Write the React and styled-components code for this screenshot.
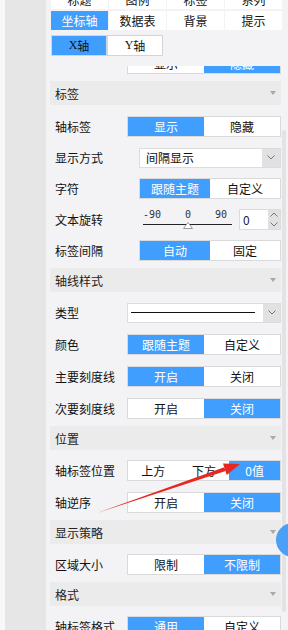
import React from 'react'
import styled, { createGlobalStyle } from 'styled-components'

const BLUE = '#409eff'

const GlobalStyle = createGlobalStyle`
  html, body {
    margin: 0;
    padding: 0;
  }
  body {
    width: 288px;
    height: 630px;
    overflow: hidden;
    background: #f3f3f5;
    color: #111;
    font-family: "Noto Sans CJK SC", "Noto Sans", sans-serif;
    font-size: 12px;
  }
`

const Frame = styled.div`
  position: relative;
  display: flex;
  width: 288px;
  height: 630px;
  overflow: hidden;
`

const Edge = styled.div`
  width: 5px;
  flex-shrink: 0;
  background: #f8f8f6;
`

const Sidebar = styled.div`
  width: 41px;
  flex-shrink: 0;
  background: #e6e6e6;
`

const Panel = styled.div`
  flex: 1;
  min-width: 0;
  display: flex;
  flex-direction: column;
  padding-left: 4px;
  background: #f3f3f5;
`

const TabGrid = styled.div`
  display: grid;
  grid-template-columns: repeat(4, 57px);
  grid-auto-rows: 19px;
  column-gap: 1px;
  row-gap: 2px;
  margin: -10px 0 0 1px;
`

const Tab = styled.div`
  display: flex;
  align-items: center;
  justify-content: center;
  background: ${p => (p.active ? BLUE : '#fff')};
  color: ${p => (p.active ? '#fff' : '#111')};
`

const AxisTabs = styled.div`
  display: flex;
  margin: 5px 0 0 1px;
`

const AxisTab = styled.div`
  box-sizing: border-box;
  width: 56px;
  height: 21px;
  display: flex;
  align-items: center;
  justify-content: center;
  border: 1px solid ${p => (p.active ? '#cfd8e2' : '#d4d4d4')};
  background: ${p => (p.active ? BLUE : '#fff')};
  color: #111;
`

const Latin = styled.span`
  font-family: "Liberation Serif", serif;
  font-size: 12px;
`

const ScrollArea = styled.div`
  flex: 1;
  min-height: 0;
  display: flex;
  margin-top: 10px;
  overflow: hidden;
`

const ScrollContent = styled.div`
  width: 231px;
  flex-shrink: 0;
  display: flex;
  flex-direction: column;
  margin-top: -13px;
`

const ScrollTrack = styled.div`
  width: 4px;
  margin-left: 1px;
  display: flex;
  flex-direction: column;
`

const ScrollThumb = styled.div`
  margin-top: 64px;
  height: 482px;
  border-radius: 2px;
  background: #e3e3e5;
`

const SectionHeader = styled.div`
  height: 24px;
  flex-shrink: 0;
  display: flex;
  align-items: center;
  justify-content: space-between;
  padding: 0 5px;
  background: #ebebeb;
  color: #222;
`

const Caret = styled.span`
  width: 0;
  height: 0;
  border-left: 3.5px solid transparent;
  border-right: 3.5px solid transparent;
  border-top: 4px solid #a8a8a8;
`

const SectionBody = styled.div`
  display: flex;
  flex-direction: column;
  gap: ${p => p.gap || 11}px;
  padding: ${p => (p.top === undefined ? 10 : p.top)}px 0 7px;
`

const Row = styled.div`
  display: flex;
  align-items: center;
  height: 21px;
  flex-shrink: 0;
  padding-left: 5px;
`

const Label = styled.div`
  width: ${p => p.w}px;
  flex-shrink: 0;
  white-space: nowrap;
  color: #111;
`

const Segment = styled.div`
  box-sizing: border-box;
  flex: 1;
  height: 21px;
  display: flex;
  border: 1px solid #dadada;
  background: #fff;
`

const SegItem = styled.div`
  flex: 1;
  display: flex;
  align-items: center;
  justify-content: center;
  background: ${p => (p.active ? BLUE : 'transparent')};
  color: ${p => (p.active ? '#fff' : '#111')};
`

const Select = styled.div`
  box-sizing: border-box;
  flex: 1;
  height: 20px;
  display: flex;
  border: 1px solid #dcdcdc;
  background: #fff;
`

const SelectValue = styled.div`
  flex: 1;
  display: flex;
  align-items: center;
  padding-left: 6px;
`

const LineSample = styled.div`
  flex: 1;
  height: 1px;
  margin: 0 8px 0 3px;
  align-self: center;
  background: #111;
`

const SelectArrow = styled.div`
  width: ${p => p.w || 18}px;
  display: flex;
  align-items: center;
  justify-content: center;
  background: #e1e1e1;
`

const SliderBox = styled.div`
  position: relative;
  width: 89px;
  height: 21px;
  margin-left: 4px;
  display: flex;
  flex-direction: column;
`

const SliderLabels = styled.div`
  display: flex;
  justify-content: space-between;
  padding-right: 5px;
  margin-top: 1px;
  font-family: "DejaVu Sans Mono", monospace;
  font-size: 10px;
  line-height: 10px;
  color: #333;
`

const SliderTrack = styled.div`
  height: 1px;
  margin-top: 4px;
  background: #222;
`

const Thumb = styled.svg`
  position: absolute;
  top: 13px;
  transform: translateX(-50%);
`

const NumberBox = styled.div`
  box-sizing: border-box;
  flex: 1;
  height: 21px;
  margin-left: 7px;
  display: flex;
  border: 1px solid #dcdcdc;
  background: #fff;
`

const NumberValue = styled.div`
  flex: 1;
  display: flex;
  align-items: center;
  padding-left: 3px;
  color: #1a1a40;
`

const Spin = styled.div`
  width: 12px;
  display: flex;
  flex-direction: column;
  background: #e1e1e1;
`

const SpinHalf = styled.div`
  flex: 1;
  display: flex;
  align-items: center;
  justify-content: center;
`

const Overlay = styled.svg`
  position: absolute;
  left: 0;
  top: 0;
  pointer-events: none;
`

const FloatBall = styled.div`
  position: absolute;
  left: 276px;
  top: 523px;
  width: 34px;
  height: 34px;
  border-radius: 50%;
  background: #4a9ff6;
`

const Chevron = ({ up }) => (
  <svg width="8" height="5" viewBox="0 0 8 5">
    <polyline
      points={up ? '0.5,4.5 4,1 7.5,4.5' : '0.5,0.5 4,4 7.5,0.5'}
      fill="none"
      stroke="#777"
      strokeWidth="1"
    />
  </svg>
)

const Seg = ({ items, active }) => (
  <Segment>
    {items.map((t, i) => (
      <SegItem key={t} active={i === active}>{t}</SegItem>
    ))}
  </Segment>
)

const Header = ({ children }) => (
  <SectionHeader>
    {children}
    <Caret />
  </SectionHeader>
)

const tabs = ['标题', '图例', '标签', '系列', '坐标轴', '数据表', '背景', '提示']

export default function App() {
  const rotation = 0
  return (
    <Frame>
      <GlobalStyle />
      <Edge />
      <Sidebar />
      <Panel>
        <TabGrid>
          {tabs.map(t => (
            <Tab key={t} active={t === '坐标轴'}>{t}</Tab>
          ))}
        </TabGrid>
        <AxisTabs>
          <AxisTab active><Latin>X</Latin>轴</AxisTab>
          <AxisTab><Latin>Y</Latin>轴</AxisTab>
        </AxisTabs>

        <ScrollArea>
          <ScrollContent>
            {/* row scrolled half out of view */}
            <SectionBody top={0}>
              <Row>
                <Label w={72} />
                <Seg items={['显示', '隐藏']} active={1} />
              </Row>
            </SectionBody>

            <Header>标签</Header>
            <SectionBody top={11} gap={10}>
              <Row>
                <Label w={72}>轴标签</Label>
                <Seg items={['显示', '隐藏']} active={0} />
              </Row>
              <Row>
                <Label w={84}>显示方式</Label>
                <Select>
                  <SelectValue>间隔显示</SelectValue>
                  <SelectArrow><Chevron /></SelectArrow>
                </Select>
              </Row>
              <Row>
                <Label w={84}>字符</Label>
                <Seg items={['跟随主题', '自定义']} active={0} />
              </Row>
              <Row>
                <Label w={84}>文本旋转</Label>
                <SliderBox>
                  <SliderLabels>
                    <span>-90</span>
                    <span>0</span>
                    <span>90</span>
                  </SliderLabels>
                  <SliderTrack />
                  <Thumb
                    width="10"
                    height="7"
                    viewBox="0 0 10 7"
                    style={{ left: `${((rotation + 90) / 180) * 100}%` }}
                  >
                    <polygon points="5,0.5 9.5,6.5 0.5,6.5" fill="#fff" stroke="#9a9a9a" />
                  </Thumb>
                </SliderBox>
                <NumberBox>
                  <NumberValue>{rotation}</NumberValue>
                  <Spin>
                    <SpinHalf><Chevron up /></SpinHalf>
                    <SpinHalf><Chevron /></SpinHalf>
                  </Spin>
                </NumberBox>
              </Row>
              <Row>
                <Label w={84}>标签间隔</Label>
                <Seg items={['自动', '固定']} active={0} />
              </Row>
            </SectionBody>

            <Header>轴线样式</Header>
            <SectionBody>
              <Row>
                <Label w={72}>类型</Label>
                <Select>
                  <LineSample />
                  <SelectArrow w={17}><Chevron /></SelectArrow>
                </Select>
              </Row>
              <Row>
                <Label w={72}>颜色</Label>
                <Seg items={['跟随主题', '自定义']} active={0} />
              </Row>
              <Row>
                <Label w={72}>主要刻度线</Label>
                <Seg items={['开启', '关闭']} active={0} />
              </Row>
              <Row>
                <Label w={72}>次要刻度线</Label>
                <Seg items={['开启', '关闭']} active={1} />
              </Row>
            </SectionBody>

            <Header>位置</Header>
            <SectionBody>
              <Row>
                <Label w={72}>轴标签位置</Label>
                <Seg items={['上方', '下方', '0值']} active={2} />
              </Row>
              <Row>
                <Label w={72}>轴逆序</Label>
                <Seg items={['开启', '关闭']} active={1} />
              </Row>
            </SectionBody>

            <Header>显示策略</Header>
            <SectionBody>
              <Row>
                <Label w={72}>区域大小</Label>
                <Seg items={['限制', '不限制']} active={1} />
              </Row>
            </SectionBody>

            <Header>格式</Header>
            <SectionBody>
              <Row>
                <Label w={72}>轴标签格式</Label>
                <Seg items={['通用', '自定义']} active={0} />
              </Row>
            </SectionBody>
          </ScrollContent>
          <ScrollTrack>
            <ScrollThumb />
          </ScrollTrack>
        </ScrollArea>
      </Panel>

      <Overlay width="288" height="630" viewBox="0 0 288 630">
        <polygon points="97,513 225.6,470.9 224.3,467.3" fill="#e8281e" />
        <polygon points="240,464 226.8,474.9 223,463.5" fill="#e8281e" />
      </Overlay>
      <FloatBall />
    </Frame>
  )
}
